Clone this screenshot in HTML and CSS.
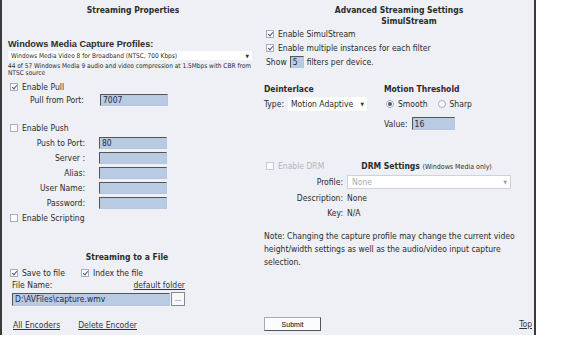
FILE: index.html
```html
<!DOCTYPE html>
<html lang="en">
<head>
    <meta charset="UTF-8">
    <meta name="viewport" content="width=device-width, initial-scale=1.0">
    <title>Streaming Properties</title>
    <link rel="stylesheet" href="styles.css">
</head>
<body>

<div class="panel">

    <!-- Left column: basic streaming properties -->
    <div class="col left">
        <div class="title">Streaming Properties</div>
        <div class="profiles">Windows Media Capture Profiles:</div>
        <div class="select profile-select">
            <span>Windows Media Video 8 for Broadband (NTSC, 700 Kbps)</span>
            <i class="arrow">&#9660;</i>
        </div>
        <p class="desc">44 of 57 Windows Media 9 audio and video compression at 1.5Mbps with CBR from NTSC source</p>

        <label class="check pull"><input type="checkbox" checked> Enable Pull</label>
        <div class="pull-row">
            <span class="lbl">Pull from Port:</span>
            <input class="text port" type="text" value="7007">
        </div>

        <label class="check push"><input type="checkbox"> Enable Push</label>
        <div class="push-grid">
            <span>Push to Port:</span><input class="text" type="text" value="80">
            <span>Server :</span><input class="text" type="text">
            <span>Alias:</span><input class="text" type="text">
            <span>User Name:</span><input class="text" type="text">
            <span>Password:</span><input class="text" type="password">
        </div>
        <label class="check scripting"><input type="checkbox"> Enable Scripting</label>

        <div class="title file-title">Streaming to a File</div>
        <div class="file-checks">
            <label class="check"><input type="checkbox" checked> Save to file</label>
            <label class="check"><input type="checkbox" checked> Index the file</label>
        </div>
        <div class="file-head">
            <span>File Name:</span>
            <a href="#">default folder</a>
        </div>
        <div class="file-row">
            <input class="text file" type="text" value="D:\AVFiles\capture.wmv">
            <button class="browse">...</button>
        </div>

        <div class="links">
            <a href="#">All Encoders</a>
            <a href="#">Delete Encoder</a>
        </div>
    </div>

    <!-- Right column: advanced settings -->
    <div class="col right">
        <div class="title">Advanced Streaming Settings</div>
        <div class="title sub">SimulStream</div>
        <label class="check simul"><input type="checkbox" checked> Enable SimulStream</label>
        <label class="check multi"><input type="checkbox" checked> Enable multiple instances for each filter</label>
        <div class="show-row">
            Show <input class="text small" type="text" value="5"> filters per device.
        </div>

        <div class="two">
            <div>
                <div class="head">Deinterlace</div>
                <div class="type-row">
                    Type:
                    <div class="select type-select"><span>Motion Adaptive</span><i class="arrow">&#9660;</i></div>
                </div>
            </div>
            <div>
                <div class="head">Motion Threshold</div>
                <div class="radios">
                    <label><input type="radio" name="mt" checked> Smooth</label>
                    <label><input type="radio" name="mt"> Sharp</label>
                </div>
                <div class="value-row">Value: <input class="text value" type="text" value="16"></div>
            </div>
        </div>

        <div class="drm-row">
            <label class="check disabled"><input type="checkbox" disabled> Enable DRM</label>
            <div class="head drm-head">DRM Settings <small>(Windows Media only)</small></div>
        </div>
        <div class="drm-grid">
            <span>Profile:</span>
            <div class="select drm-select"><span>None</span><i class="arrow">&#9660;</i></div>
            <span>Description:</span><span>None</span>
            <span>Key:</span><span>N/A</span>
        </div>

        <p class="note">Note: Changing the capture profile may change the current video height/width settings as well as the audio/video input capture selection.</p>

        <div class="bottom">
            <button class="submit">Submit</button>
            <a href="#">Top</a>
        </div>
    </div>

</div>

</body>
</html>
```

FILE: styles.css
```css
/* page */
body { margin: 0; background: #fff; font-family: "DejaVu Sans Condensed", "DejaVu Sans", sans-serif; font-size: 8.5px; color: #2b2b2b; }
.panel { display: flex; width: 532px; height: 335px; background: #eef0f5; border-left: 2px solid #3a3a3a; border-right: 2px solid #3a3a3a; box-sizing: content-box; }
.col { display: flex; flex-direction: column; box-sizing: border-box; }
.left { width: 256px; padding-left: 6px; }
.right { flex: 1; padding-left: 6px; }
a { color: #2e3444; }

/* headings */
.title { margin-top: 4px; height: 12px; line-height: 12px; text-align: center; font-weight: bold; font-size: 8.5px; }
.title.sub { margin-top: 0; height: 11px; line-height: 11px; padding-left: 20px; }
.profiles { margin-top: 22px; height: 12px; line-height: 12px; font-weight: bold; font-size: 9.2px; font-family: "Liberation Sans", Arial, sans-serif; }
.head { font-weight: bold; height: 12px; line-height: 12px; }
.head small { font-weight: normal; font-size: 7px; }

/* fake select boxes */
.select { position: relative; background: #fff; display: flex; align-items: center; box-sizing: border-box; }
.select .arrow { position: absolute; right: 3px; font-style: normal; font-size: 5px; color: #333; }
.profile-select { margin-top: 1px; width: 244px; height: 9px; font-size: 6.5px; padding-left: 3px; }
.desc { margin: 3px 0 0; font-size: 6.5px; line-height: 6.5px; width: 248px; }

/* checkboxes */
.check { display: flex; align-items: center; height: 12px; }
.check input, .radios input { appearance: none; margin: 0 4px 0 2px; width: 8px; height: 8px; border: 1px solid #a9adb8; background: #fbfbfd; box-sizing: border-box; position: relative; }
.check input:checked::after { content: ""; position: absolute; left: 2px; top: 0; width: 2px; height: 4px; border: solid #4a5a7a; border-width: 0 1.5px 1.5px 0; transform: rotate(40deg); }
.check.disabled { color: #b5b7bd; }
.check.disabled input { border-color: #c9cbd2; }
.radios input { border-radius: 50%; }
.radios input:checked::after { content: ""; position: absolute; left: 1px; top: 1px; width: 4px; height: 4px; border-radius: 50%; background: #4d5a72; }

/* text inputs */
.text { box-sizing: border-box; height: 12px; border: 1px solid #b7c8de; border-top-color: #555; border-left-color: #555; background: #b8cbe3; font-family: inherit; font-size: 8.5px; color: #1f2a44; padding: 0 2px; margin: 0; }

.pull { margin-top: 5px; }
.pull-row { margin-top: 1px; display: flex; align-items: center; height: 12px; padding-left: 22px; }
.pull-row .lbl { width: 70px; }
.port { width: 68px; }

.push { margin-top: 16px; }
.push-grid { display: grid; grid-template-columns: 77px 68px; column-gap: 14px; row-gap: 3px; margin-top: 3px; }
.push-grid span { text-align: right; line-height: 12px; }
.scripting { margin-top: 3px; }

.file-title { margin-top: 27px; padding-right: 12px; }
.file-checks { display: flex; margin-top: 4px; gap: 14px; }
.file-head { display: flex; justify-content: space-between; width: 173px; height: 10px; line-height: 10px; margin-top: 1px; padding-left: 4px; }
.file-row { display: flex; margin-top: 2px; padding-left: 4px; align-items: center; }
.file { width: 158px; height: 13px; }
.browse { margin-left: 1px; width: 14px; height: 14px; padding: 0; font-size: 7px; border: 1px solid #888; background: #f8f8fa; line-height: 8px; }

.links { display: flex; gap: 18px; margin-top: 13px; padding-left: 5px; height: 12px; line-height: 12px; }

/* right column */
.simul { margin-top: 1px; }
.multi { margin-top: 2px; }
.show-row { margin-top: 2px; height: 12px; display: flex; align-items: center; gap: 3px; padding-left: 2px; }
.small { width: 14px; }

.two { display: grid; grid-template-columns: 120px 1fr; margin-top: 15px; }
.type-row { display: flex; align-items: center; gap: 4px; margin-top: 2px; height: 14px; }
.type-select { width: 79px; height: 14px; padding-left: 3px; }
.radios { display: flex; gap: 8px; margin-top: 2px; height: 14px; align-items: center; }
.radios label { display: flex; align-items: center; }
.value-row { display: flex; align-items: center; gap: 4px; margin-top: 6px; height: 13px; }
.value { width: 43px; height: 13px; }

.drm-row { display: flex; align-items: center; margin-top: 30px; }
.drm-head { margin-left: 37px; }
.drm-grid { display: grid; grid-template-columns: 79px 164px; column-gap: 4px; row-gap: 3px; margin-top: 3px; align-items: center; }
.drm-grid > span { line-height: 12px; }
.drm-grid > span:nth-child(odd) { text-align: right; }
.drm-select { height: 14px; border: 1px solid #cfd2da; color: #a9abb2; padding-left: 4px; }
.drm-select .arrow { color: #999; }

.note { margin: 11px 0 0; line-height: 13px; width: 262px; }

.bottom { display: flex; justify-content: space-between; align-items: center; margin-top: auto; margin-bottom: 4px; padding-right: 2px; }
.submit { width: 57px; height: 14px; font-size: 7px; padding: 0; background: #fbfcfe; border: 1px solid #aaa; border-right-color: #555; border-bottom-color: #555; }
```
